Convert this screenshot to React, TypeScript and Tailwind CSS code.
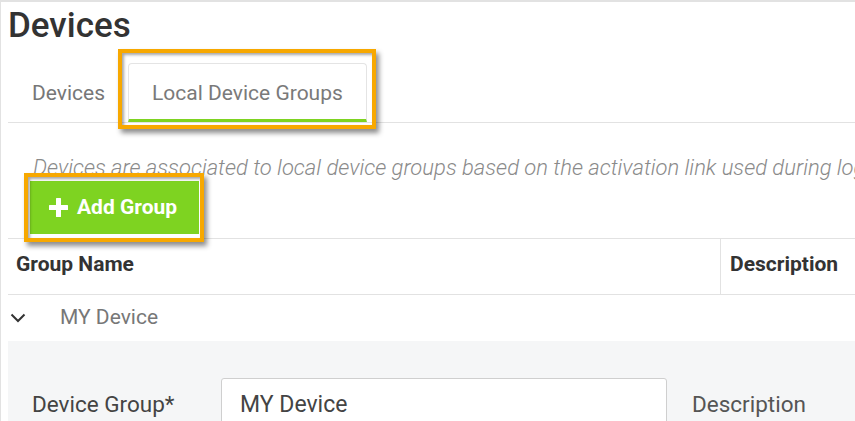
import React from "react";

function Highlight({ className }: { className: string }) {
  return (
    <div
      className={
        "pointer-events-none absolute z-10 border-[4px] border-[#f7a800] shadow-[3px_4px_5px_rgba(0,0,0,0.45),inset_2px_2px_3px_rgba(0,0,0,0.35)] " +
        className
      }
    />
  );
}

export default function App() {
  return (
    <div
      className="relative h-[421px] w-[855px] overflow-hidden border-l border-t-[2px] border-[#e2e2e2] bg-white pl-[7px]"
      style={{ fontFamily: "Roboto, 'Liberation Sans', sans-serif" }}
    >
      <h1 className="mt-[4px] text-[35px] font-medium leading-[40px] text-[#333]">Devices</h1>

      {/* Tabs */}
      <div className="mt-[17px] flex items-end border-b border-[#e2e2e2]">
        <div className="flex h-[59px] w-[120px] items-center pl-[24px] pt-[3px] text-[21px] text-[#777]">Devices</div>
        <div className="relative flex h-[59px] items-center rounded-t-[4px] border border-b-[3px] border-[#e4e4e4] border-b-[#7ed321] px-[23px] pt-[4px] text-[21px] text-[#7a7a7a]">
          Local Device Groups
          <Highlight className="-bottom-[10px] -left-[11px] -right-[10px] -top-[15px]" />
        </div>
      </div>

      <p className="ml-[25px] mt-[33px] whitespace-nowrap text-[22px] font-light italic leading-[24px] text-[#8a8a8a]">
        Devices are associated to local device groups based on the activation link used during login.
      </p>

      <div className="relative ml-[22px] mt-[1px] w-[169px]">
        <button className="flex h-[53px] w-[169px] items-center gap-[9px] bg-[#7ed321] pl-[19px] text-[21px] font-bold text-white">
          <svg width="19" height="19" viewBox="0 0 19 19" fill="white">
            <rect x="7" y="0" width="5" height="19" rx="0.5" />
            <rect x="0" y="7" width="19" height="5" rx="0.5" />
          </svg>
          Add Group
        </button>
        <Highlight className="-bottom-[8px] -left-[6px] -right-[5px] -top-[8px]" />
      </div>

      {/* Table header */}
      <div className="mt-[4px] flex h-[57px] border-y border-[#e2e2e2]">
        <div className="flex w-[712px] items-center pb-[4px] pl-[8px] text-[21px] font-bold text-[#333]">Group Name</div>
        <div className="flex flex-1 items-center border-l border-[#e2e2e2] pb-[4px] pl-[9px] text-[21px] font-bold text-[#333]">
          Description
        </div>
      </div>

      {/* Row */}
      <div className="flex h-[46px] items-center">
        <svg width="16" height="10" viewBox="0 0 16 10" className="ml-[2px]" fill="none" stroke="#333" strokeWidth="2">
          <path d="M1.5 1.5 L8 8 L14.5 1.5" />
        </svg>
        <span className="ml-[34px] text-[21px] text-[#777]">MY Device</span>
      </div>

      {/* Expanded panel */}
      <div className="h-[200px] bg-[#f5f6f7] pl-[24px] pt-[37px]">
        <div className="flex items-center">
          <div className="w-[189px] text-[22.5px] text-[#444]">Device Group*</div>
          <div className="flex h-[54px] w-[446px] items-center rounded-[3px] border border-[#cfcfcf] bg-white pl-[18px] text-[23px] text-[#444]">
            MY Device
          </div>
          <div className="ml-[25px] text-[22.5px] text-[#555]">Description</div>
        </div>
      </div>
    </div>
  );
}
